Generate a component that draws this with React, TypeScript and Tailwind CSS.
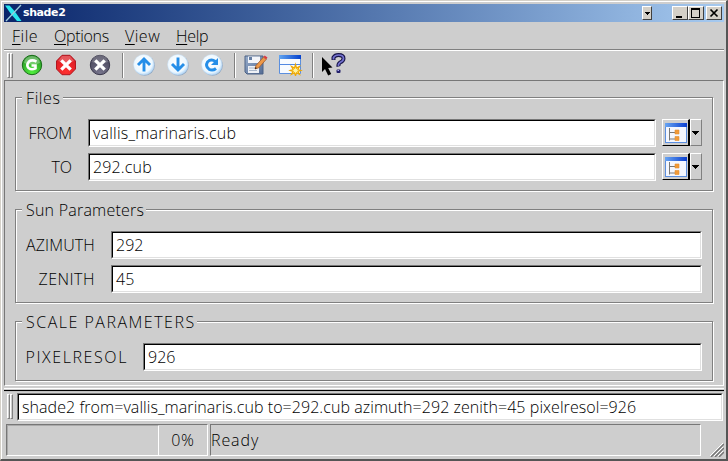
import React from "react";

const sunken =
  "border border-t-[#777] border-l-[#777] border-r-white border-b-white";
const raised =
  "border border-t-white border-l-white border-r-[#404040] border-b-[#404040]";

function Field({ value, className, text = "" }: { value: string; className: string; text?: string }) {
  return (
    <div className={`${sunken} ${className}`}>
      <div className="flex h-full w-full items-center border border-t-black border-l-black border-r-[#e0e0e0] border-b-[#e0e0e0] bg-white pl-[3px]">
        <span className={`whitespace-pre ${text}`}>{value}</span>
      </div>
    </div>
  );
}

function Group({ title, height, titleWidth, text, children }: { title: string; height: string; titleWidth: string; text: string; children: React.ReactNode }) {
  return (
    <div className={`relative ml-[10px] w-[698px] shrink-0 border border-[#808080] shadow-[1px_1px_0_#fff,inset_1px_1px_0_#fff] ${height}`}>
      <div className={`absolute -top-[11px] left-[6px] h-[22px] bg-[#cecece] pl-[4px] leading-[22px] whitespace-nowrap ${titleWidth} ${text}`}>
        {title}
      </div>
      {children}
    </div>
  );
}

function TreeButton() {
  return (
    <div className="ml-[6px] flex h-[28px] w-[41px]">
      <div className="flex h-[27px] w-[28px] items-center justify-center border border-r-2 border-t-white border-l-white border-r-black border-b-black">
        <svg width="22" height="20" viewBox="0 0 22 20">
          <defs>
            <linearGradient id="bar">
              <stop offset="0" stopColor="#69a5f2" />
              <stop offset="1" stopColor="#0b3fd0" />
            </linearGradient>
          </defs>
          <rect x=".5" y=".5" width="21" height="19" fill="#f4f7ff" stroke="#5b8fe0" />
          <rect width="22" height="4" fill="url(#bar)" />
          <path d="M4.500 5v12.500M4.500 9.500H10M4.500 16H10" stroke="#777" fill="none" />
          <path d="M10 7h4v4h-4zM10 13.500h4v4h-4z" fill="#f29a38" stroke="#e08e30" strokeWidth=".6" />
        </svg>
      </div>
      <div className="flex h-[27px] w-[12px] items-center justify-center border border-t-white border-l-white border-r-[#808080] border-b-[#808080]">
        <svg width="8" height="4" shapeRendering="crispEdges"><path d="M0 0h7L3.500 4z" /></svg>
      </div>
    </div>
  );
}

function Sep({ className }: { className: string }) {
  return <div className={`h-[25px] w-[2px] shrink-0 border-l border-[#808080] bg-white ${className}`} />;
}

function Grip({ className }: { className: string }) {
  return (
    <div className={`flex w-[6px] shrink-0 ${className}`}>
      <div className="w-[3px] border border-t-white border-l-white border-r-[#808080] border-b-[#808080]" />
      <div className="w-[3px] border border-t-white border-l-white border-r-[#808080] border-b-[#808080]" />
    </div>
  );
}

function RoundIcon({ kind }: { kind: "go" | "stop" | "exit" | "up" | "down" | "reset" }) {
  const blue = kind === "up" || kind === "down" || kind === "reset";
  return (
    <svg className="mr-[12px] shrink-0" width="22" height="22" viewBox="0 0 22 22">
      <defs>
        <radialGradient id="go" cx=".5" cy=".9" r=".9"><stop stopColor="#4fee3c" /><stop offset="1" stopColor="#278e25" /></radialGradient>
        <radialGradient id="stop" cx=".5" cy=".85" r=".9"><stop stopColor="#ff3030" /><stop offset="1" stopColor="#d51922" /></radialGradient>
        <radialGradient id="exit" cx=".5" cy=".9" r=".9"><stop stopColor="#77758c" /><stop offset="1" stopColor="#444257" /></radialGradient>
        <radialGradient id="nav" cx=".45" cy=".42" r=".6"><stop stopColor="#fff" /><stop offset=".75" stopColor="#edf8ff" /><stop offset="1" stopColor="#a8d2f8" /></radialGradient>
      </defs>
      {blue && <><circle cx="11.500" cy="11.500" r="10.300" fill="#8ba6c4" /><circle cx="10.800" cy="10.700" r="10.300" fill="url(#nav)" stroke="#c4dcf2" strokeWidth=".5" /></>}
      {kind === "go" && <><circle cx="11" cy="11" r="9.700" fill="url(#go)" stroke="#176d16" /><path d="M3 9a8 7 0 0 1 16 0Q11 12 3 9" fill="#fff" opacity=".3" /><path d="M15.500 7.600Q11 5.200 7.900 7.600Q5 11 7.500 14Q10.500 16.400 14.500 14.300V11.500H10.500" fill="none" stroke="#fff" strokeWidth="2.600" /></>}
      {kind === "stop" && <><path d="M7 1.300h8L20.500 7v8L15 20.700H7L1.500 15V7z" fill="url(#stop)" stroke="#b01720" /><path d="M7 2h8l4 5q-8 4-16 0z" fill="#fff" opacity=".25" /></>}
      {kind === "exit" && <><circle cx="11" cy="11" r="9.700" fill="url(#exit)" stroke="#39374b" /><path d="M3 8a8 7 0 0 1 16 0Q11 12 3 8" fill="#fff" opacity=".2" /></>}
      {(kind === "stop" || kind === "exit") && <path d="M6.300 6.300l9.400 9.400M15.700 6.300l-9.400 9.400" stroke="#fff" strokeWidth="3.300" />}
      {kind === "up" && <path d="M11 17.500V5.500M5 11l6-6 6 6" fill="none" stroke="#258ee8" strokeWidth="2.900" />}
      {kind === "down" && <path d="M11 3.500v12M5 10l6 6 6-6" fill="none" stroke="#258ee8" strokeWidth="2.900" />}
      {kind === "reset" && <><path d="M15 14.500Q11.500 17.300 8 15.200Q4 12 6.500 8Q10 4.500 14.500 7.500" fill="none" stroke="#258ee8" strokeWidth="2.900" /><path d="M17 4v7h-7z" fill="#258ee8" /></>}
    </svg>
  );
}

function SaveIcon() {
  return (
    <svg className="shrink-0" width="24" height="22" viewBox="0 0 24 22">
      <defs><linearGradient id="disk" x2="1" y2="1"><stop stopColor="#98aecc" /><stop offset="1" stopColor="#536b94" /></linearGradient></defs>
      <path d="M1 2h18v18H3l-2-2z" fill="url(#disk)" stroke="#4c6285" />
      <rect x="4" y="2.500" width="12" height="6.500" fill="#f3f5fa" /><path d="M5 3h3v3H5" fill="#647da3" />
      <rect x="4" y="12" width="11" height="7" fill="#eef1f6" /><path d="M5 14h7M5 16.500h8" stroke="#a9b7ca" />
      <path d="M11 15l1-3.500L19.500 3l2.800 2.300-7.500 8.500z" fill="#ed9847" stroke="#9c5b31" strokeWidth=".8" />
      <path d="M19.500 3l1.200-1.500 2.800 2-1.200 1.800z" fill="#da3942" /><path d="M11 15l.6-1.800 1.200.9z" />
    </svg>
  );
}

function NewWindowIcon() {
  return (
    <svg className="shrink-0" width="24" height="22" viewBox="0 0 24 22">
      <defs><linearGradient id="title"><stop stopColor="#62a5f0" /><stop offset="1" stopColor="#0541cd" /></linearGradient></defs>
      <path d="M.5 1.500h21v18H.5z" fill="#f7faff" stroke="#5b8fde" />
      <path d="M0 1h22v4H0z" fill="url(#title)" /><path d="M1 10.500h20" stroke="#5288e2" />
      <path d="M16.500 10.500l1 3.500 3-1.600-1.600 3 3 1-3 1 1.600 3-3-1.600-1 3-1-3-3 1.600 1.600-3-3-1 3-1-1.600-3 3 1.600z" fill="#fff4a0" stroke="#f0a800" strokeWidth="1.200" />
    </svg>
  );
}

function HelpIcon() {
  return (
    <svg className="ml-[7px] shrink-0" width="26" height="24" viewBox="0 0 26 24">
      <path d="M1 4v15l3-3 3.200 6.500 3-1.500-3-6 4.300-.5z" />
      <path d="M12.500 7V4.500Q14 2 17.500 2Q22.500 2 22.500 5.500Q22.500 8 19 9.500Q17 11 17.500 13.500" fill="none" stroke="#171448" strokeWidth="4" />
      <path d="M12.500 6.500V4.500Q14 2 17.500 2Q22.500 2 22.500 5.500Q22.500 8 19 9.500Q17 11 17.500 13" fill="none" stroke="#7472d0" strokeWidth="1.700" />
      <rect x="15.500" y="16.500" width="4" height="3.500" rx="1" fill="#23206b" /><path d="M16.500 17.500h1.500" stroke="#aaa8ee" />
    </svg>
  );
}

function Menu({ label, className }: { label: string; className: string }) {
  return <span className={`block shrink-0 whitespace-nowrap ${className}`}><u className="decoration-1 underline-offset-[2px]">{label[0]}</u>{label.slice(1)}</span>;
}

export default function App() {
  return (
    <div className="flex h-[461px] w-[728px] flex-col overflow-hidden border-t border-r-2 border-b-2 border-l border-t-[#d4d0c8] border-l-[#d4d0c8] border-r-[#555] border-b-[#555] bg-[#cecece] font-['Open_Sans','Noto_Sans',sans-serif] text-[16px] leading-[22px] font-light text-black">
      <div className="flex min-h-0 flex-1 flex-col border-t border-l border-white pt-[2px] pl-[2px]">
        <header className="flex h-[18px] w-[720px] shrink-0 items-center bg-linear-to-r from-[#0a246a] to-[#a6caf0]">
          <svg className="ml-[1px] shrink-0" width="17" height="18" viewBox="0 0 17 18">
            <path d="M0 1.500h4.500l5 5.500 7 10h-4.500L6 10z" fill="#29e7ee" />
            <path d="M16 1L8.500 9 1 17" stroke="#9ccbdc" strokeWidth="1.300" fill="none" />
          </svg>
          <span className="ml-[1px] w-[61px] font-['DejaVu_Sans',sans-serif] text-[11px] leading-[18px] font-bold tracking-[-0.4px] text-white">shade2</span>
          <div className={`ml-[558px] flex h-[14px] w-[10px] items-center justify-center bg-[#d4d0c8] ${raised}`}>
            <svg width="5" height="3" shapeRendering="crispEdges"><path d="M0 0h5L2.500 3z" /></svg>
          </div>
          <div className={`ml-[20px] h-[14px] w-[16px] bg-[#d4d0c8] ${raised}`}>
            <svg width="14" height="12"><path d="M3 9h6v2H3z" /></svg>
          </div>
          <div className={`h-[14px] w-[16px] bg-[#d4d0c8] ${raised}`}>
            <svg width="14" height="12" shapeRendering="crispEdges"><path d="M2 1h9v10H2zM3 3v7h7V3z" fillRule="evenodd" /></svg>
          </div>
          <div className={`ml-[2px] h-[14px] w-[16px] bg-[#d4d0c8] ${raised}`}>
            <svg width="14" height="12"><path d="M3.500 2.500l7 7M10.500 2.500l-7 7" stroke="#000" strokeWidth="1.700" /></svg>
          </div>
        </header>
        <nav className="flex h-[29px] w-[720px] shrink-0 items-center border-b border-white pl-[8px] shadow-[inset_0_-1px_0_#808080]">
          <Menu label="File" className="w-[42px] tracking-[0.5px]" />
          <Menu label="Options" className="w-[71px] tracking-[-0.3px]" />
          <Menu label="View" className="w-[51px] tracking-[0.5px]" />
          <Menu label="Help" className="w-[40px] tracking-[-0.3px]" />
        </nav>
        <div className="flex h-[29px] w-[720px] shrink-0 items-center pb-px pl-[3px]">
          <Grip className="mr-[8px] h-[25px]" />
          <RoundIcon kind="go" /><RoundIcon kind="stop" /><RoundIcon kind="exit" />
          <Sep className="mr-[9px] -ml-[1px]" />
          <RoundIcon kind="up" /><RoundIcon kind="down" /><RoundIcon kind="reset" />
          <Sep className="mr-[8px] -ml-px" />
          <SaveIcon /><div className="w-[11px]" /><NewWindowIcon />
          <Sep className="ml-[9px]" />
          <HelpIcon />
        </div>
        <main className={`flex h-[306px] w-[720px] shrink-0 flex-col pt-[16px] ${sunken}`}>
          <Group title="Files" height="h-[94px]" titleWidth="w-[41px]" text="tracking-[0.6px]">
            <div className="mt-[21px] flex h-[28px] items-center">
              <span className="w-[56px] text-right">FROM</span>
              <Field className="ml-[16px] h-[28px] w-[568px]" value="vallis_marinaris.cub" text="tracking-[0.22px]" />
              <TreeButton />
            </div>
            <div className="mt-[6px] flex h-[28px] items-center">
              <span className="w-[56px] text-right">TO</span>
              <Field className="ml-[16px] h-[28px] w-[568px]" value="292.cub" text="tracking-[0.15px]" />
              <TreeButton />
            </div>
          </Group>
          <div className="h-[18px] shrink-0" />
          <Group title="Sun Parameters" height="h-[94px]" titleWidth="w-[124px]" text="tracking-[0.22px]">
            <div className="mt-[21px] flex h-[28px] items-center">
              <span className="w-[79px] text-right tracking-[0.15px]">AZIMUTH</span>
              <Field className="ml-[16px] h-[28px] w-[591px]" value="292" />
            </div>
            <div className="mt-[6px] flex h-[28px] items-center">
              <span className="w-[79px] text-right tracking-[0.5px]">ZENITH</span>
              <Field className="ml-[16px] h-[28px] w-[591px]" value="45" />
            </div>
          </Group>
          <div className="h-[18px] shrink-0" />
          <Group title="SCALE PARAMETERS" height="h-[60px]" titleWidth="w-[175px]" text="tracking-[1.5px]">
            <div className="mt-[21px] flex h-[28px] items-center">
              <span className="w-[112px] text-right tracking-[1.6px]">PIXELRESOL</span>
              <Field className="ml-[15px] h-[28px] w-[559px]" value="926" />
            </div>
          </Group>
        </main>
        <div className="h-[5px] w-[720px] shrink-0 border-b border-black shadow-[inset_0_2px_0_#cecece,inset_0_3px_0_#fff]" />
        <div className="flex h-[30px] w-[720px] shrink-0 items-center border-t border-[#c0c0c0] pl-[3px]">
          <Grip className="mr-[4px] h-[25px]" />
          <Field className="h-[28px] w-[706px]" value="shade2 from=vallis_marinaris.cub to=292.cub azimuth=292 zenith=45 pixelresol=926" text="tracking-[0.065px]" />
        </div>
        <footer className="flex w-[720px] flex-1 pt-[3px] pl-[2px]">
          <div className={`flex h-[32px] w-[202px] ${sunken}`}>
            <div className="h-[30px] w-[152px] border-t border-r border-l border-t-[#aaa] border-r-white border-l-[#aaa]" />
            <span className="w-[48px] text-center leading-[30px] tracking-[0.8px]">0%</span>
          </div>
          <div className={`ml-[2px] h-[32px] w-[492px] leading-[30px] tracking-[0.9px] ${sunken}`}>Ready</div>
          <svg className="mt-[19px] ml-[9px]" width="14" height="14">
            <path d="M1 14L14 1M5 14L14 5M9 14l5-5" stroke="#777" strokeWidth="1.500" />
            <path d="M0 13L13 0M4 13l9-9M8 13l5-5" stroke="#fff" />
          </svg>
        </footer>
      </div>
    </div>
  );
}
